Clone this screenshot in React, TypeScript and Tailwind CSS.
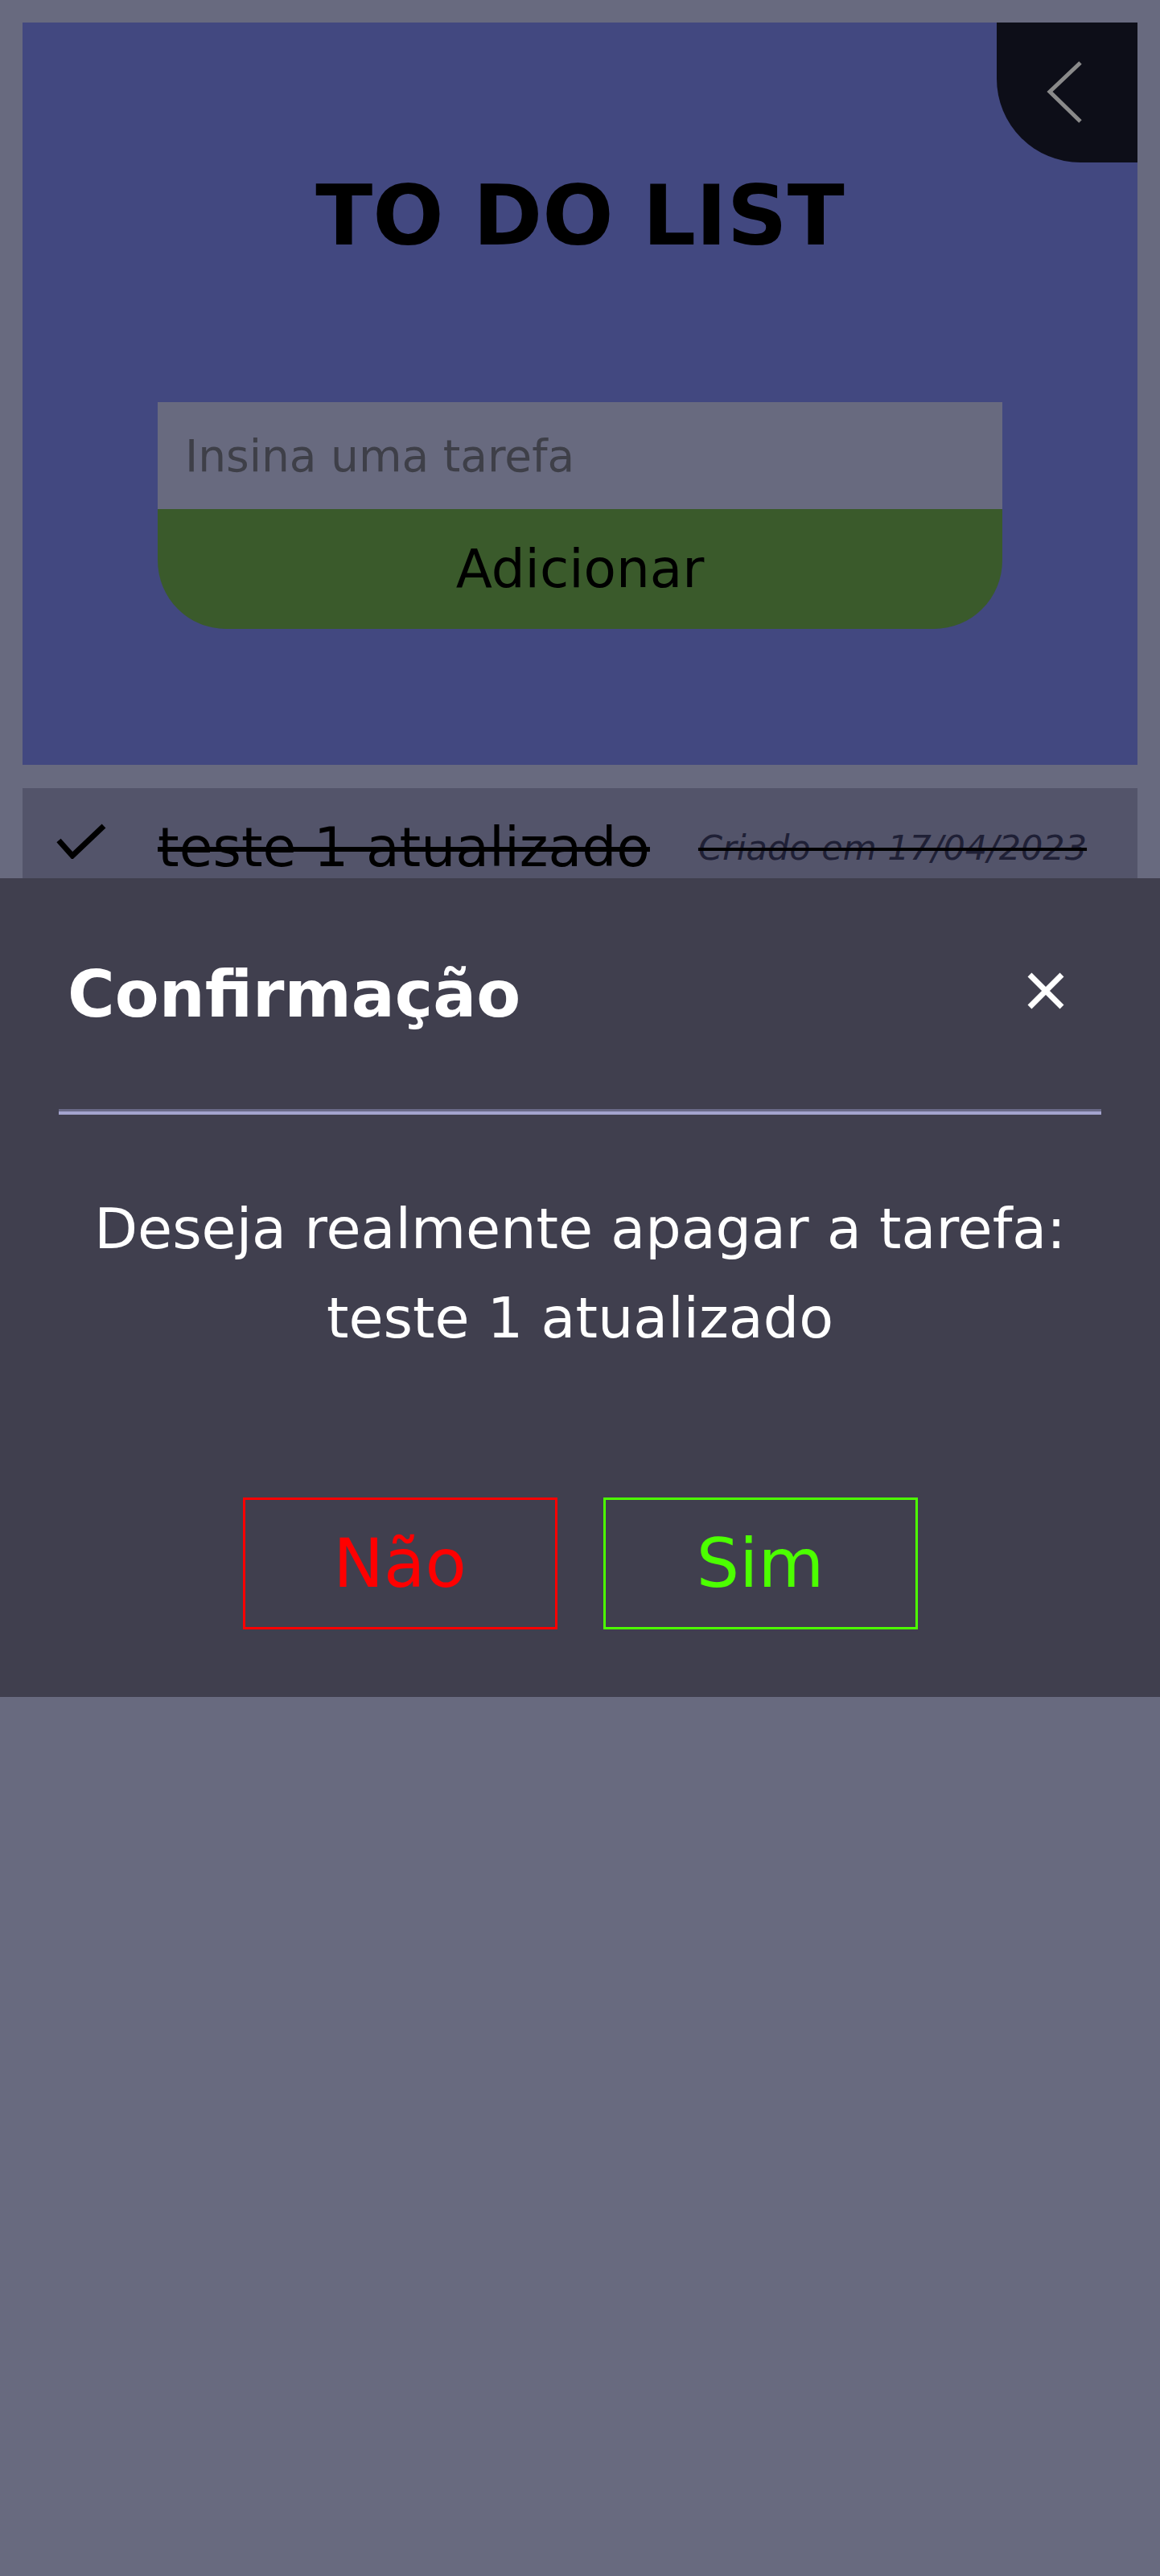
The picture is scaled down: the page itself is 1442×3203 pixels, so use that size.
import React from 'react';

const font = "font-['DejaVu_Sans',sans-serif]";

const App: React.FC = () => {
    return (
        <div className={`relative min-h-[3203px] w-full bg-[#686a7f] p-[28px] ${font}`}>
            {/* Header card */}
            <div className="relative flex h-[923px] flex-col items-center bg-[#424880] pt-[188px]">
                <button className="absolute right-0 top-0 flex h-[174px] w-[175px] items-center justify-center rounded-bl-[104px] bg-[#0d0e18]">
                    <svg width="48" height="80" viewBox="0 0 48 80" className="ml-[-8px]">
                        <polyline points="44,3 6,39 44,76" fill="none" stroke="#8a8a8a" strokeWidth="5" />
                    </svg>
                </button>
                <h1 className="text-[104px] font-bold leading-none text-black">TO DO LIST</h1>

                <div className="mt-[180px] flex w-[1050px] flex-col">
                    <input
                        placeholder="Insina uma tarefa"
                        className="h-[133px] w-full bg-[#686a7f] px-[34px] text-[55px] text-black outline-none placeholder:text-[#3e3f48]"
                    />
                    <button className="h-[149px] w-full rounded-b-[85px] bg-[#3a5a2b] text-[66px] text-black">
                        Adicionar
                    </button>
                </div>
            </div>

            {/* Task list */}
            <div className="mt-[29px] flex items-center bg-[#53546a] pb-[40px] pl-[41px] pt-[40px]">
                <svg width="63" height="45" viewBox="0 0 63 45" className="-mt-[17px] shrink-0">
                    <path d="M4 22 L21 41 L60 4" fill="none" stroke="#000" strokeWidth="7" />
                </svg>
                <span className="ml-[64px] text-[68px] leading-none text-black line-through decoration-[6px]">
                    teste 1 atualizado
                </span>
                <span className="ml-[60px] text-[43px] italic leading-none text-[#1f2036] line-through decoration-black decoration-[4px]">
                    Criado em 17/04/2023
                </span>
            </div>

            {/* Confirm modal */}
            <div className="absolute left-0 top-[1092px] flex h-[1018px] w-full flex-col bg-[#403f4e]">
                <div className="flex items-center justify-between pl-[84px] pr-[117px] pt-[105px]">
                    <h2 className="text-[80px] font-bold leading-none text-white">Confirmação</h2>
                    <button className="-mt-[10px]">
                        <svg width="50" height="48" viewBox="0 0 50 48">
                            <path d="M5 4 L45 44 M45 4 L5 44" stroke="#fff" strokeWidth="7" />
                        </svg>
                    </button>
                </div>
                <div className="mx-[73px] mt-[102px] h-[7px] border-t-[3px] border-[#6a6a88] bg-[#a4a4ce]" />
                <p className="mt-[87px] text-center text-[70px] leading-[111px] text-white">
                    Deseja realmente apagar a tarefa:
                    <br />
                    teste 1 atualizado
                </p>
                <div className="mt-[167px] flex justify-center gap-[57px]">
                    <button className="h-[164px] w-[391px] border-[3px] border-[#ff0000] text-[84px] text-[#ff0000]">
                        Não
                    </button>
                    <button className="h-[164px] w-[391px] border-[3px] border-[#4cff00] text-[84px] text-[#4cff00]">
                        Sim
                    </button>
                </div>
            </div>
        </div>
    );
};

export default App;
